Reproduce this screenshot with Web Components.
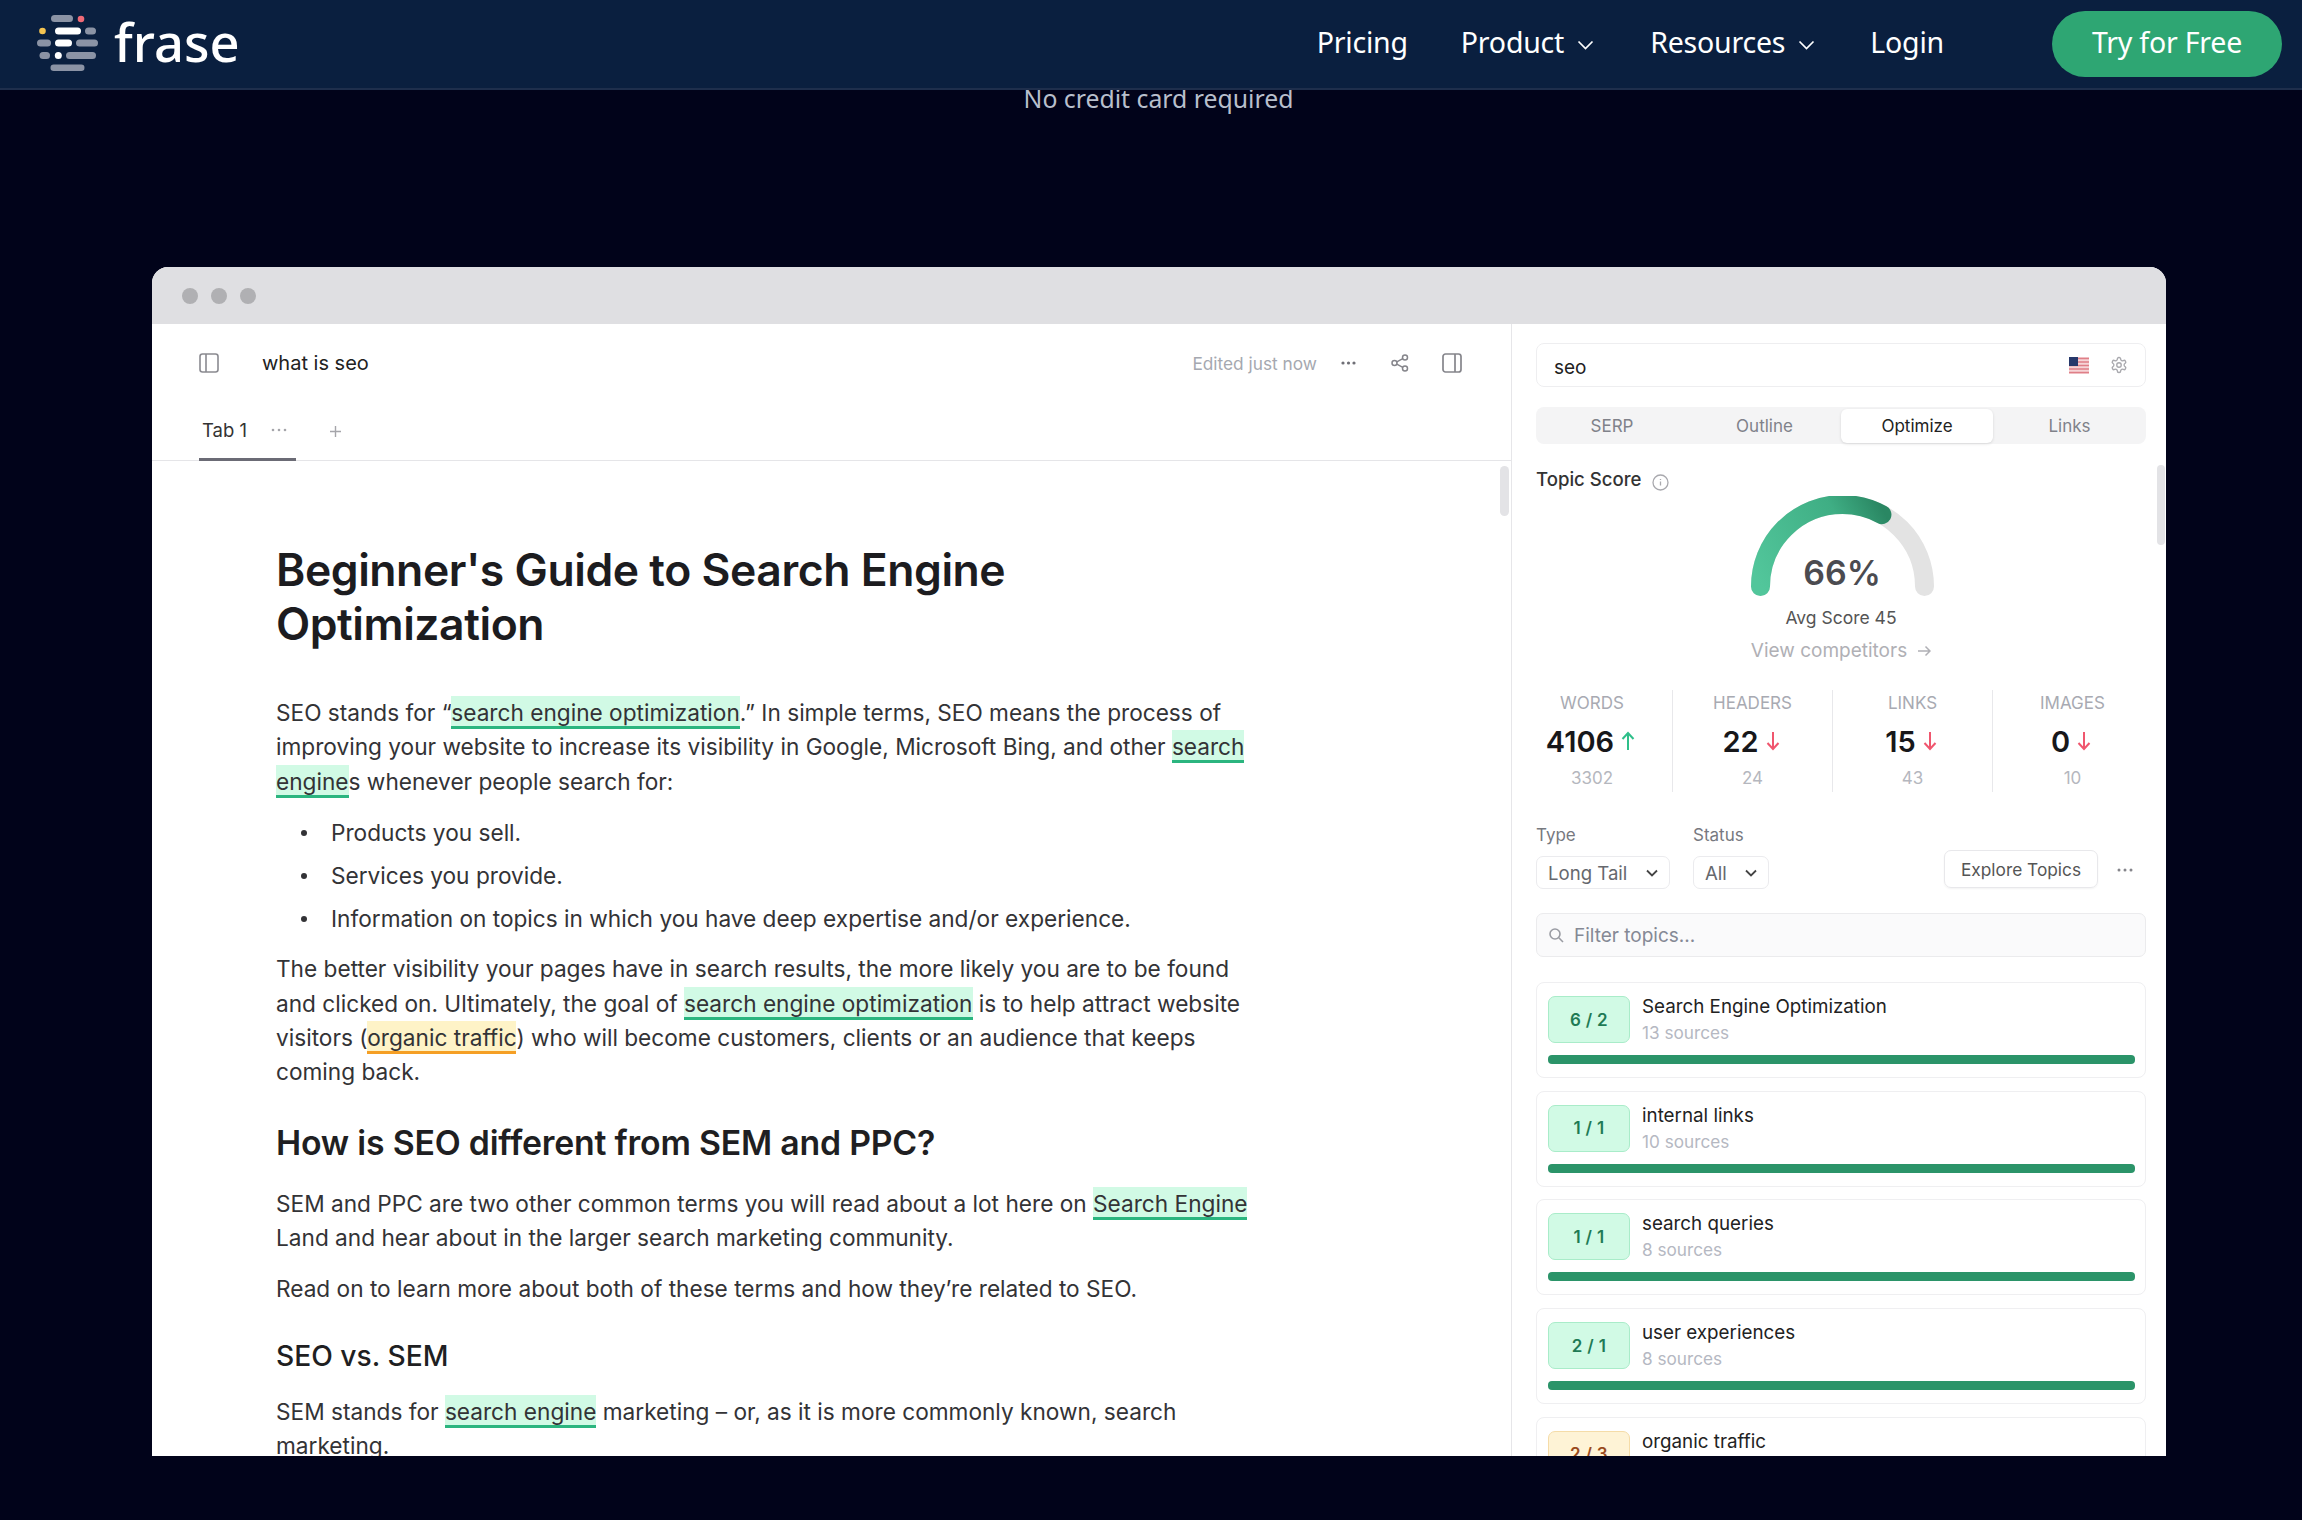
<!DOCTYPE html>
<html lang="en">
<head>
<meta charset="utf-8">
<title>Frase</title>
<style>
  html, body { margin: 0; padding: 0; background: #01031a; }
  body { width: 2302px; height: 1520px; overflow: hidden; font-family: "Inter", "Liberation Sans", sans-serif; }
</style>
</head>
<body>
<site-header></site-header>
<hero-note>No credit card required</hero-note>
<app-window>
  <doc-pane slot="left">
    <doc-article>
      <h1>Beginner's Guide to Search Engine<br>Optimization</h1>
      <p>SEO stands for “<hl-term>search engine optimization</hl-term>.” In simple terms, SEO means the process of<br>improving your website to increase its visibility in Google, Microsoft Bing, and other <hl-term>search</hl-term><br><hl-term>engine</hl-term>s whenever people search for:</p>
      <ul>
        <li>Products you sell.</li>
        <li>Services you provide.</li>
        <li>Information on topics in which you have deep expertise and/or experience.</li>
      </ul>
      <p class="p2">The better visibility your pages have in search results, the more likely you are to be found<br>and clicked on. Ultimately, the goal of <hl-term>search engine optimization</hl-term> is to help attract website<br>visitors (<hl-term tone="warn">organic traffic</hl-term>) who will become customers, clients or an audience that keeps<br>coming back.</p>
      <h2>How is SEO different from SEM and PPC?</h2>
      <p class="p3">SEM and PPC are two other common terms you will read about a lot here on <hl-term>Search Engine</hl-term><br>Land and hear about in the larger search marketing community.</p>
      <p class="p4">Read on to learn more about both of these terms and how they’re related to SEO.</p>
      <h3>SEO vs. SEM</h3>
      <p class="p5">SEM stands for <hl-term>search engine</hl-term> marketing – or, as it is more commonly known, search<br>marketing.</p>
    </doc-article>
  </doc-pane>
  <seo-panel slot="right">
    <stat-cell slot="stats" label="WORDS" value="4106" sub="3302" dir="up"></stat-cell>
    <stat-cell slot="stats" label="HEADERS" value="22" sub="24" dir="down"></stat-cell>
    <stat-cell slot="stats" label="LINKS" value="15" sub="43" dir="down"></stat-cell>
    <stat-cell slot="stats" label="IMAGES" value="0" sub="10" dir="down"></stat-cell>
    <topic-card slot="topics" count="6 / 2" title="Search Engine Optimization" sub="13 sources"></topic-card>
    <topic-card slot="topics" count="1 / 1" title="internal links" sub="10 sources"></topic-card>
    <topic-card slot="topics" count="1 / 1" title="search queries" sub="8 sources"></topic-card>
    <topic-card slot="topics" count="2 / 1" title="user experiences" sub="8 sources"></topic-card>
    <topic-card slot="topics" count="2 / 3" title="organic traffic" sub="8 sources" tone="warn"></topic-card>
  </seo-panel>
</app-window>

<script>
class SiteHeader extends HTMLElement {
  connectedCallback() {
    const chevron = `<svg width="17" height="10" viewBox="0 0 17 10" fill="none" stroke="#fff" stroke-width="1.7"><path d="M1.5 1.5 8.5 8.5 15.5 1.5"/></svg>`;
    this.attachShadow({ mode: 'open' }).innerHTML = `
      <style>
        :host { display: flex; align-items: center; height: 88px; background: #0a1f3f; border-bottom: 2px solid #1e2e4c;
          font-family: "Noto Sans", "Open Sans", sans-serif; color: #fff; position: relative; z-index: 2; }
        .logo { display: flex; align-items: center; margin-left: 37px; }
        .name { font-size: 52.500px; font-weight: 500; margin: -4px 0 0 15px; line-height: 60px; }
        nav { display: flex; align-items: center; margin-left: auto; font-size: 28.500px; letter-spacing: -.2px; padding-bottom: 4px; }
        nav a { display: flex; align-items: center; gap: 13px; }
        nav a svg { margin-top: 5px; }
        .pricing { margin-right: 53px; }
        .product { margin-right: 56px; }
        .resources { margin-right: 55px; }
        .login { margin-right: 108px; }
        .cta { display: flex; align-items: center; justify-content: center; width: 230px; height: 66px; margin: 4px 20px 0 0;
          background: #2ea673; border-radius: 33px; padding-bottom: 4px; box-sizing: border-box; }
      </style>
      <div class="logo">
        <svg width="62" height="58" viewBox="37 13 62 58">
          <g fill="#8b93a5">
            <rect x="51" y="13" width="22" height="7" rx="3.5"/>
            <rect x="85" y="25.500" width="11" height="7" rx="3.5"/>
            <rect x="37" y="37.500" width="14" height="7" rx="3.5"/>
            <rect x="76" y="37.500" width="22" height="7" rx="3.5"/>
            <rect x="39.500" y="50" width="10.500" height="7" rx="3.5"/>
            <rect x="66" y="50" width="30" height="7" rx="3.5"/>
            <rect x="50.500" y="62.500" width="34" height="6.500" rx="3.2"/>
          </g>
          <circle cx="81" cy="17" r="3.300" fill="#f06a77"/>
          <circle cx="42.500" cy="29" r="3.300" fill="#f5c451"/>
          <g fill="#fff">
            <rect x="55" y="25.500" width="26" height="7" rx="3.5"/>
            <rect x="55" y="37.500" width="17" height="7" rx="3.5"/>
            <circle cx="58.300" cy="53.500" r="3.500"/>
          </g>
        </svg>
        <span class="name">frase</span>
      </div>
      <nav>
        <a class="pricing">Pricing</a>
        <a class="product">Product ${chevron}</a>
        <a class="resources">Resources ${chevron}</a>
        <a class="login">Login</a>
        <a class="cta">Try for Free</a>
      </nav>`;
  }
}

class HeroNote extends HTMLElement {
  connectedCallback() {
    this.attachShadow({ mode: 'open' }).innerHTML = `
      <style>
        :host { display: block; height: 177px; padding-left: 15px; box-sizing: border-box; text-align: center;
          font-family: "Noto Sans", "Open Sans", sans-serif; font-size: 24.800px; line-height: 16px; color: #b8bfcc; }
      </style>
      <slot></slot>`;
  }
}

class AppWindow extends HTMLElement {
  connectedCallback() {
    this.attachShadow({ mode: 'open' }).innerHTML = `
      <style>
        :host { display: block; width: 2014px; height: 1189px; margin-left: 152px; border-radius: 16px 16px 0 0;
          overflow: hidden; background: #fff; position: relative; }
        .bar { display: flex; align-items: center; gap: 13px; height: 57px; padding-left: 30px; background: #dfdfe2; }
        .bar i { width: 16px; height: 16px; border-radius: 50%; background: #b0b0b3; }
        .main { display: flex; height: 1132px; }
        ::slotted([slot=left]) { width: 1360px; border-right: 1px solid #e6e6e9; }
        ::slotted([slot=right]) { flex: 1; }
      </style>
      <div class="bar"><i></i><i></i><i></i></div>
      <div class="main"><slot name="left"></slot><slot name="right"></slot></div>`;
  }
}

class DocPane extends HTMLElement {
  connectedCallback() {
    this.attachShadow({ mode: 'open' }).innerHTML = `
      <style>
        :host { display: flex; flex-direction: column; overflow: hidden; position: relative; box-sizing: border-box; color: #222;
          font-family: "Inter", "Liberation Sans", sans-serif; }
        .tools { display: flex; align-items: center; height: 78px; padding: 0 49px 0 47px; flex: none; }
        .doc-name { margin-left: 43px; font-size: 20px; }
        .edited { margin-left: auto; font-size: 17.300px; color: #a5a8b0; }
        .more { margin-left: 24px; }
        .share { margin-left: 35px; }
        .side { margin-left: 33px; }
        .tabs { display: flex; align-items: center; height: 59px; flex: none; padding-left: 47px; border-bottom: 1px solid #e5e5e8; box-sizing: border-box; }
        .tab { display: flex; align-items: center; width: 97px; height: 59px; box-sizing: border-box; padding: 0 0 0 3px; border-bottom: 3px solid #6b6b75;
          font-size: 18.500px; color: #333; margin-bottom: -1px; }
        .tab svg { margin-left: 24px; }
        .plus { margin-left: 34px; }
        .thumb { position: absolute; left: 1348px; top: 142px; width: 9px; height: 50px; border-radius: 5px; background: #e3e3e6; }
      </style>
      <div class="tools">
        <svg width="20" height="20" viewBox="0 0 20 20" fill="none" stroke="#8a8a90" stroke-width="1.600"><rect x="1" y="1" width="18" height="18" rx="2.5"/><path d="M7 1v18"/></svg>
        <span class="doc-name">what is seo</span>
        <span class="edited">Edited just now</span>
        <svg class="more" width="15" height="4" viewBox="0 0 15 4" fill="#6f6f76"><circle cx="2" cy="2" r="1.600"/><circle cx="7.500" cy="2" r="1.600"/><circle cx="13" cy="2" r="1.600"/></svg>
        <svg class="share" width="18" height="18" viewBox="0 0 18 18" fill="none" stroke="#85858b" stroke-width="1.500"><circle cx="3.500" cy="9" r="2.500"/><circle cx="14" cy="3.500" r="2.500"/><circle cx="14" cy="14.500" r="2.500"/><path d="M5.800 7.800 11.800 4.700M5.800 10.200 11.800 13.300"/></svg>
        <svg class="side" width="20" height="20" viewBox="0 0 20 20" fill="none" stroke="#85858b" stroke-width="1.700"><rect x="1" y="1" width="18" height="18" rx="2.5"/><path d="M13 1v18"/></svg>
      </div>
      <div class="tabs">
        <div class="tab">Tab 1
          <svg width="16" height="4" viewBox="0 0 16 4" fill="#a5a5aa"><circle cx="2" cy="2" r="1.300"/><circle cx="8" cy="2" r="1.300"/><circle cx="14" cy="2" r="1.300"/></svg>
        </div>
        <svg class="plus" width="11" height="11" viewBox="0 0 11 11" stroke="#a5a5aa" stroke-width="1.400"><path d="M5.500 0v11M0 5.500h11"/></svg>
      </div>
      <slot></slot>
      <div class="thumb"></div>`;
  }
}

class DocArticle extends HTMLElement {
  constructor() {
    super();
    this.attachShadow({ mode: 'open' });
  }
  connectedCallback() {
    // article markup stays in the page, moved into the shadow root so the article styles apply
    const html = this.innerHTML;
    this.innerHTML = '';
    this.shadowRoot.innerHTML = `
      <style>
        :host { display: block; padding: 82px 0 0 124px; font-family: "Inter", "Liberation Sans", sans-serif; color: #333336; white-space: nowrap; }
        h1 { margin: 0; font-size: 44.500px; line-height: 54px; font-weight: 600; color: #1c1c1f; letter-spacing: -.45px; }
        h2 { margin: 31px 0 0; font-size: 33.800px; line-height: 44px; font-weight: 600; color: #1f1f22; letter-spacing: -.2px; }
        h3 { margin: 31px 0 0; font-size: 28.200px; line-height: 38px; font-weight: 500; color: #1f1f22; }
        p { margin: 45px 0 0; font-size: 22.650px; line-height: 34.400px; }
        ul { margin: 12px 0 0; padding: 0 0 0 55px; list-style: none; }
        li { position: relative; font-size: 22.650px; line-height: 43px; }
        li::before { content: ""; position: absolute; left: -30px; top: 19px; width: 6px; height: 6px; border-radius: 50%; background: #333336; }
        p.p2 { margin-top: 12px; }
        p.p3 { margin-top: 22px; }
        p.p4 { margin-top: 16px; }
        p.p5 { margin-top: 20px; }
      </style>
      ${html}`;
  }
}

class HlTerm extends HTMLElement {
  connectedCallback() {
    // no whitespace around the slot: the host is inline and a stray text node would show as a gap
    this.attachShadow({ mode: 'open' }).innerHTML = `<style>
        :host { display: inline; background: #d1fae5; border-bottom: 3px solid #2bb57f; padding: 3px 0 0; }
        :host([tone=warn]) { background: #fef3c7; border-bottom-color: #f59f25; }
      </style><slot></slot>`;
  }
}

class GaugeScore extends HTMLElement {
  connectedCallback() {
    this.attachShadow({ mode: 'open' }).innerHTML = `
      <style>
        :host { display: block; width: 183px; height: 100px; position: relative; }
        svg { display: block; }
        .pct { position: absolute; left: 0; right: 0; top: 55px; text-align: center; font-size: 34px; line-height: 44px; font-weight: 600; color: #4b4b50; }
      </style>
      <svg width="183" height="100" viewBox="0 0 183 100" fill="none">
        <defs>
          <linearGradient id="g" gradientUnits="userSpaceOnUse" x1="10" y1="90" x2="135" y2="20">
            <stop offset="0" stop-color="#52c69b"/><stop offset=".7" stop-color="#3fae84"/><stop offset="1" stop-color="#2a8763"/>
          </linearGradient>
        </defs>
        <path d="M9.500 90.500A82 82 0 0 1 173.500 90.500" stroke="#e3e3e3" stroke-width="19" stroke-linecap="round"/>
        <path d="M9.500 90.500A82 82 0 0 1 173.500 90.500" stroke="url(#g)" stroke-width="19" stroke-linecap="round" pathLength="100" stroke-dasharray="66 100"/>
      </svg>
      <div class="pct">66%</div>`;
  }
}

class StatCell extends HTMLElement {
  connectedCallback() {
    const up = this.getAttribute('dir') === 'up';
    const arrow = up
      ? `<svg width="14" height="20" viewBox="0 0 14 20" fill="none" stroke="#2fbf8a" stroke-width="2"><path d="M7 19V2M1.500 8 7 2l5.500 6"/></svg>`
      : `<svg width="14" height="20" viewBox="0 0 14 20" fill="none" stroke="#f0566e" stroke-width="2"><path d="M7 1v17M1.500 12 7 18l5.500-6"/></svg>`;
    this.attachShadow({ mode: 'open' }).innerHTML = `
      <style>
        :host { display: flex; flex-direction: column; align-items: center; height: 102px; box-sizing: border-box; padding-top: 3px; border-left: 1px solid #e8e8eb; }
        :host(:first-child) { border-left: 0; }
        .label { font-size: 17px; line-height: 20px; color: #a8aab2; }
        .value { display: flex; align-items: center; gap: 7px; margin: 10px 3px 0 0; height: 36px; font-size: 29px; font-weight: 600; color: #17171a; }
        .sub { margin-top: 9px; font-size: 17px; line-height: 20px; color: #b5b7be; }
      </style>
      <div class="label">${this.getAttribute('label')}</div>
      <div class="value">${this.getAttribute('value')}${arrow}</div>
      <div class="sub">${this.getAttribute('sub')}</div>`;
  }
}

class TopicCard extends HTMLElement {
  connectedCallback() {
    this.attachShadow({ mode: 'open' }).innerHTML = `
      <style>
        :host { display: block; height: 96px; box-sizing: border-box; padding: 13px 10px 0 11px; flex: none;
          border: 1px solid #efeff1; border-radius: 8px; background: #fff; }
        .top { display: flex; gap: 12px; height: 47px; }
        .badge { display: flex; align-items: center; justify-content: center; width: 82px; box-sizing: border-box; border-radius: 7px;
          background: #d1fae5; border: 1px solid #a9ecc9; color: #1f7a55; font-size: 17px; font-weight: 600; letter-spacing: .3px; }
        :host([tone=warn]) .badge { background: #fef3d6; border-color: #f5dca8; color: #9a4a1c; }
        .title { font-size: 18.800px; line-height: 22px; color: #222; }
        .sub { margin-top: 4px; font-size: 17.200px; line-height: 22px; color: #b5b8c2; }
        .bar { height: 9px; margin-top: 12px; border-radius: 4px; background: #2b9469; }
      </style>
      <div class="top">
        <div class="badge">${this.getAttribute('count')}</div>
        <div><div class="title">${this.getAttribute('title')}</div><div class="sub">${this.getAttribute('sub')}</div></div>
      </div>
      <div class="bar"></div>`;
  }
}

class SeoPanel extends HTMLElement {
  connectedCallback() {
    const caret = `<svg width="12" height="8" viewBox="0 0 12 8" fill="none" stroke="#444" stroke-width="1.800"><path d="M1 1.500 6 6.500 11 1.500"/></svg>`;
    this.attachShadow({ mode: 'open' }).innerHTML = `
      <style>
        :host { display: block; overflow: hidden; position: relative; box-sizing: border-box; padding: 19px 20px 0 24px; color: #222;
          font-family: "Inter", "Liberation Sans", sans-serif; }
        .search { display: flex; align-items: center; height: 44px; box-sizing: border-box; padding: 4px 17px 0; border: 1px solid #eeeef0; border-radius: 8px; font-size: 19px; }
        .search svg { margin-top: -4px; }
        .search .flag { margin-left: auto; }
        .search .gear { margin-left: 21px; }
        .tabs { display: grid; grid-template-columns: 152px 153px 152px 1fr; align-items: center; height: 37px; margin-top: 20px; background: #f4f4f5; border-radius: 8px;
          font-size: 17px; color: #80828a; text-align: center; }
        .tabs .on { height: 34px; line-height: 34px; background: #fff; border-radius: 6px; color: #222; box-shadow: 0 1px 3px rgba(0,0,0,.12); }
        .score-head { display: flex; align-items: center; gap: 10px; margin-top: 23px; height: 24px; font-size: 18.600px; font-weight: 500; color: #333; }
        .score-head svg { margin-top: 7px; }
        gauge-score { margin: 5px auto 0; position: relative; left: 1px; }
        .avg { margin-top: 10px; line-height: 24px; font-size: 17.500px; color: #555; text-align: center; }
        .view { display: flex; justify-content: center; align-items: center; gap: 11px; margin-top: 9px; line-height: 24px; font-size: 19px; color: #b0b0b5; }
        .stats { display: grid; grid-template-columns: repeat(4, 160px); margin: 27px 0 0 -24px; }
        .filters { display: flex; align-items: flex-end; margin-top: 33px; height: 64px; }
        .field { margin-right: 23px; }
        .field label { display: block; height: 31px; line-height: 20px; font-size: 17px; color: #77797f; }
        .select { display: flex; align-items: center; justify-content: space-between; height: 33px; box-sizing: border-box; padding: 0 11px; border: 1px solid #ebebee; border-radius: 7px; font-size: 18.600px; color: #66686e; }
        .type .select { width: 134px; }
        .status .select { width: 76px; }
        .explore { display: flex; align-items: center; justify-content: center; margin: 0 0 1px auto; width: 154px; height: 38px; box-sizing: border-box; border: 1px solid #e8e8eb; border-radius: 7px; font-size: 17.300px; color: #555; box-shadow: 0 1px 2px rgba(0,0,0,.05); }
        .dots { margin: 0 13px 17px 19px; }
        .filter { display: flex; align-items: center; gap: 10px; height: 44px; margin-top: 24px; box-sizing: border-box; padding: 0 12px; background: #fafafb; border: 1px solid #ebebed; border-radius: 7px; font-size: 19px; color: #858995; }
        .topics { display: flex; flex-direction: column; gap: 12.700px; margin-top: 25px; }
        .thumb { position: absolute; right: 1px; top: 141px; width: 8px; height: 80px; border-radius: 4px; background: #e3e3e6; }
      </style>
      <div class="search">
        <span>seo</span>
        <svg class="flag" width="20" height="17" viewBox="0 0 20 17">
          <rect width="20" height="17" fill="#f6d5d7"/>
          <path d="M0 1.500h20M0 5h20M0 8.500h20M0 12h20M0 15.500h20" stroke="#df7f88" stroke-width="1.500"/>
          <rect width="9" height="9" fill="#27396b"/>
        </svg>
        <svg class="gear" width="18" height="18" viewBox="0 0 24 24" fill="none" stroke="#a9a9ae" stroke-width="1.800"><path d="M12.220 2h-.44a2 2 0 0 0-2 2v.18a2 2 0 0 1-1 1.730l-.43.25a2 2 0 0 1-2 0l-.15-.08a2 2 0 0 0-2.730.73l-.22.38a2 2 0 0 0 .73 2.730l.15.1a2 2 0 0 1 1 1.720v.51a2 2 0 0 1-1 1.740l-.15.09a2 2 0 0 0-.73 2.730l.22.38a2 2 0 0 0 2.730.73l.15-.08a2 2 0 0 1 2 0l.43.25a2 2 0 0 1 1 1.730V20a2 2 0 0 0 2 2h.44a2 2 0 0 0 2-2v-.18a2 2 0 0 1 1-1.730l.43-.25a2 2 0 0 1 2 0l.15.08a2 2 0 0 0 2.730-.73l.22-.39a2 2 0 0 0-.73-2.730l-.15-.08a2 2 0 0 1-1-1.740v-.5a2 2 0 0 1 1-1.740l.15-.09a2 2 0 0 0 .73-2.730l-.22-.38a2 2 0 0 0-2.730-.73l-.15.08a2 2 0 0 1-2 0l-.43-.25a2 2 0 0 1-1-1.730V4a2 2 0 0 0-2-2z"/><circle cx="12" cy="12" r="3"/></svg>
      </div>
      <div class="tabs"><div>SERP</div><div>Outline</div><div class="on">Optimize</div><div>Links</div></div>
      <div class="score-head">Topic Score
        <svg width="17" height="17" viewBox="0 0 17 17" fill="none" stroke="#a9a9ae" stroke-width="1.300"><circle cx="8.500" cy="8.500" r="7.500"/><path d="M8.500 7.500v4M8.500 5v1"/></svg>
      </div>
      <gauge-score></gauge-score>
      <div class="avg">Avg Score 45</div>
      <div class="view">View competitors
        <svg width="13" height="12" viewBox="0 0 13 12" fill="none" stroke="#b0b0b5" stroke-width="1.500"><path d="M0 6h11.500M7.500 1.500 12 6l-4.500 4.500"/></svg>
      </div>
      <div class="stats"><slot name="stats"></slot></div>
      <div class="filters">
        <div class="field type"><label>Type</label><div class="select">Long Tail ${caret}</div></div>
        <div class="field status"><label>Status</label><div class="select">All ${caret}</div></div>
        <div class="explore">Explore Topics</div>
        <svg class="dots" width="16" height="4" viewBox="0 0 16 4" fill="#85858b"><circle cx="2" cy="2" r="1.500"/><circle cx="8" cy="2" r="1.500"/><circle cx="14" cy="2" r="1.500"/></svg>
      </div>
      <div class="filter">
        <svg width="15" height="15" viewBox="0 0 15 15" fill="none" stroke="#9a9ca3" stroke-width="1.600"><circle cx="6" cy="6" r="5"/><path d="M9.800 9.800 14 14"/></svg>
        Filter topics...
      </div>
      <div class="topics"><slot name="topics"></slot></div>
      <div class="thumb"></div>`;
  }
}

customElements.define('site-header', SiteHeader);
customElements.define('hero-note', HeroNote);
customElements.define('app-window', AppWindow);
customElements.define('doc-pane', DocPane);
customElements.define('doc-article', DocArticle);
customElements.define('hl-term', HlTerm);
customElements.define('gauge-score', GaugeScore);
customElements.define('stat-cell', StatCell);
customElements.define('topic-card', TopicCard);
customElements.define('seo-panel', SeoPanel);
</script>
</body>
</html>
